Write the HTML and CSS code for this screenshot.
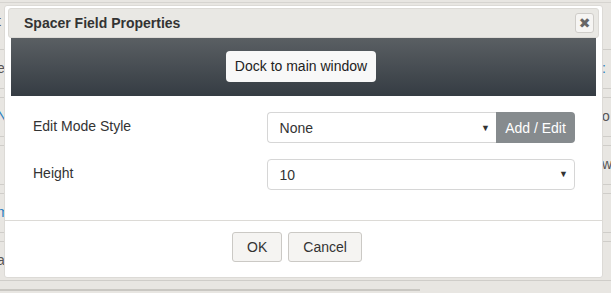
FILE: index.html
```html
<!DOCTYPE html>
<html lang="en">
<head>
    <meta charset="UTF-8">
    <title>Spacer Field Properties</title>
    <link rel="stylesheet" href="styles.css">
</head>
<body>
    <!-- page behind the dialog -->
    <div class="backdrop">
        <div class="bg-top"><span class="bg-l">t</span></div>
        <div class="bg-row"><span class="bg-l">e</span><span class="bg-r link">:</span></div>
        <div class="bg-row"><span class="bg-l link">N</span><span class="bg-r">o</span></div>
        <div class="bg-row"><span class="bg-l"></span><span class="bg-r">w</span></div>
        <div class="bg-row"><span class="bg-l link">m</span><span class="bg-r"></span></div>
        <div class="bg-row"><span class="bg-l">a</span><span class="bg-r"></span></div>
        <div class="bg-bottom"></div>
    </div>

    <div class="dialog">
        <div class="dialog-title">
            <span>Spacer Field Properties</span>
            <button class="close-btn" title="Close">&#10006;</button>
        </div>
        <div class="dock-bar">
            <button class="dock-btn">Dock to main window</button>
        </div>
        <div class="dialog-body">
            <div class="form-row">
                <label>Edit Mode Style</label>
                <div class="field">
                    <div class="select">None<span class="caret">&#9660;</span></div>
                    <button class="addon-btn">Add / Edit</button>
                </div>
            </div>
            <div class="form-row">
                <label>Height</label>
                <div class="field">
                    <div class="select full">10<span class="caret">&#9660;</span></div>
                </div>
            </div>
        </div>
        <div class="dialog-footer">
            <button class="btn">OK</button>
            <button class="btn">Cancel</button>
        </div>
    </div>
</body>
</html>
```

FILE: styles.css
```css
body {
    margin: 0;
    background-color: #e8e6e2;
    font-family: 'Liberation Sans', Arial, sans-serif;
    font-size: 14px;
    color: #333;
    overflow: hidden;
}
.backdrop {
    padding-top: 2px;
}
.bg-top {
    height: 46px;
    border-top: 1px solid #d6d4d0;
    position: relative;
}
.bg-row {
    height: 38px;
    border-top: 1px solid #cfcdc9;
    border-bottom: 1px solid #cfcdc9;
    margin-bottom: 8px;
    position: relative;
}
.bg-l, .bg-r {
    position: absolute;
    top: 10px;
    font-size: 14px;
    color: #555;
}
.bg-l { left: -3px; }
.bg-r { left: 602px; }
.link { color: #2a7fc1; }
.bg-bottom {
    width: 420px;
    height: 2px;
    background: #c9c7c2;
}
.dialog {
    position: absolute;
    left: 4px;
    top: 5px;
    width: 591px;
    height: 267px;
    background: #fff;
    border: 1px solid #dcdad6;
    border-radius: 3px;
    padding: 2px 3px;
}
.dialog-title {
    height: 28px;
    display: flex;
    align-items: center;
    justify-content: space-between;
    padding: 0 4px 0 15px;
    background: #e9e8e4;
    border: 1px solid #dcdad6;
    border-radius: 3px;
    font-weight: bold;
    color: #333;
}
.close-btn {
    width: 19px;
    height: 20px;
    padding: 0;
    border: 1px solid #cfcdc9;
    border-radius: 3px;
    background: #f6f5f3;
    color: #666;
    font-size: 14px;
    line-height: 18px;
    font-family: 'DejaVu Sans', sans-serif;
}
.dock-bar {
    margin: 0 3px;
    height: 58px;
    display: flex;
    align-items: center;
    justify-content: center;
    background: linear-gradient(#5a5f63, #353c43);
}
.dock-btn {
    width: 150px;
    height: 31px;
    border: none;
    border-radius: 4px;
    background: #f8f8f8;
    color: #222;
    font-family: inherit;
    font-size: 14px;
    margin-left: -5px;
    margin-top: -2px;
}
.dialog-body {
    padding: 16px 24px 0 25px;
    height: 108px;
}
.form-row {
    display: flex;
    align-items: center;
    margin-bottom: 16px;
}
.form-row label {
    width: 234px;
    margin-top: -3px;
}
.field {
    display: flex;
    width: 309px;
    height: 31px;
}
.select {
    flex: 1;
    position: relative;
    border: 1px solid #d6d6d6;
    border-right: none;
    border-radius: 4px 0 0 4px;
    padding: 0 12px;
    line-height: 31px;
    color: #333;
}
.select.full {
    border-right: 1px solid #d6d6d6;
    border-radius: 4px;
    line-height: 29px;
    padding-top: 1px;
}
.caret {
    position: absolute;
    right: 6px;
    top: 0;
    font-size: 9px;
    color: #333;
}
.addon-btn {
    width: 79px;
    border: none;
    border-radius: 0 4px 4px 0;
    background: #868b8e;
    color: #fff;
    font-family: inherit;
    font-size: 14px;
    padding: 0;
}
.dialog-footer {
    border-top: 1px solid #dcdad6;
    margin: 0 -3px;
    padding: 11px 13px 0 0;
    display: flex;
    justify-content: center;
    gap: 6px;
}
.btn {
    height: 30px;
    padding: 0 14px;
    border: 1px solid #cbc9c5;
    border-radius: 3px;
    background: #f5f4f2;
    color: #333;
    font-family: inherit;
    font-size: 14px;
}
```
